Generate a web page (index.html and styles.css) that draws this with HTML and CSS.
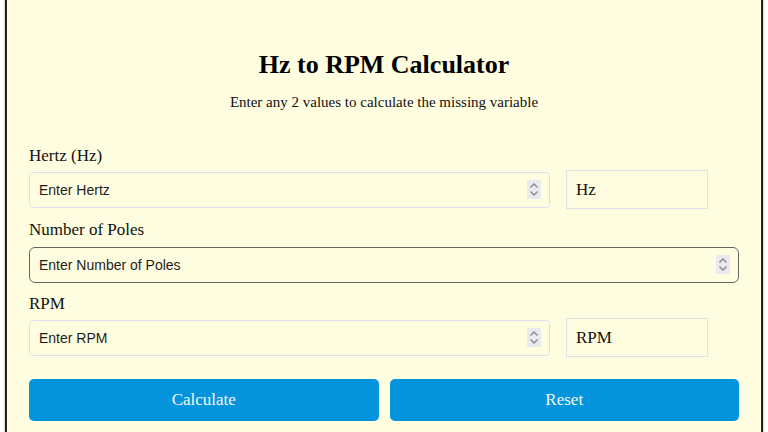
FILE: index.html
```html
<!DOCTYPE html>
<html lang="en">
<head>
    <meta charset="UTF-8">
    <meta name="viewport" content="width=device-width, initial-scale=1.0">
    <title>Hz to RPM Calculator</title>
    <link rel="stylesheet" href="styles.css">
</head>
<body>

    <div class="calculator">
        <h1>Hz to RPM Calculator</h1>
        <p class="subtitle">Enter any 2 values to calculate the missing variable</p>

        <div class="field">
            <label for="hertz">Hertz (Hz)</label>
            <div class="row">
                <div class="input-wrap">
                    <input type="number" id="hertz" placeholder="Enter Hertz">
                    <span class="spinner">
                        <svg viewBox="0 0 14 19" aria-hidden="true">
                            <path d="M3.5 7.5 7 4 10.5 7.5M3.5 11.5 7 15 10.5 11.5" fill="none" stroke="#85858c" stroke-width="1.3"/>
                        </svg>
                    </span>
                </div>
                <div class="unit">Hz</div>
            </div>
        </div>

        <div class="field">
            <label for="poles">Number of Poles</label>
            <div class="row single">
                <div class="input-wrap">
                    <input type="number" id="poles" class="active" placeholder="Enter Number of Poles">
                    <span class="spinner">
                        <svg viewBox="0 0 14 19" aria-hidden="true">
                            <path d="M3.5 7.5 7 4 10.5 7.5M3.5 11.5 7 15 10.5 11.5" fill="none" stroke="#85858c" stroke-width="1.3"/>
                        </svg>
                    </span>
                </div>
            </div>
        </div>

        <div class="field">
            <label for="rpm">RPM</label>
            <div class="row">
                <div class="input-wrap">
                    <input type="number" id="rpm" placeholder="Enter RPM">
                    <span class="spinner">
                        <svg viewBox="0 0 14 19" aria-hidden="true">
                            <path d="M3.5 7.5 7 4 10.5 7.5M3.5 11.5 7 15 10.5 11.5" fill="none" stroke="#85858c" stroke-width="1.3"/>
                        </svg>
                    </span>
                </div>
                <div class="unit">RPM</div>
            </div>
        </div>

        <div class="buttons">
            <button id="btnCalc">Calculate</button>
            <button id="btnReset">Reset</button>
        </div>
    </div>

</body>
</html>
```

FILE: styles.css
```css
body{
    margin: 0;
    background: #fff;
    font-family: "Liberation Serif", "Times New Roman", serif;
    color: #111;
}
.calculator{
    margin: 0 5px;
    min-height: 432px;
    box-sizing: border-box;
    background-color: #fffde0;
    border-left: 2px solid #222;
    border-right: 2px solid #222;
    box-shadow: 0 0 2px #888;
    padding: 50px 22px 0;
}
.calculator h1{
    margin: 0;
    font-size: 26px;
    line-height: 30px;
    text-align: center;
    color: #000;
}
.subtitle{
    margin: 12px 0 34px;
    font-size: 15px;
    line-height: 20px;
    text-align: center;
}
.field{
    margin-bottom: 11px;
}
.field label{
    display: block;
    font-size: 17px;
    line-height: 20px;
    margin-bottom: 4px;
}
.row{
    display: grid;
    grid-template-columns: 521px 142px;
    gap: 16px;
    align-items: center;
    min-height: 39px;
}
.row.single{
    grid-template-columns: 1fr;
    align-items: end;
}
.input-wrap{
    position: relative;
}
.input-wrap input{
    display: block;
    width: 100%;
    height: 36px;
    box-sizing: border-box;
    padding: 0 30px 0 9px;
    border: 1px solid #dde2e8;
    border-radius: 4px;
    background-color: transparent;
    font-family: "Liberation Sans", Arial, sans-serif;
    font-size: 14px;
    color: #222;
    outline: none;
    -moz-appearance: textfield;
}
.input-wrap input::placeholder{
    color: #1e1e1e;
}
.input-wrap input::-webkit-inner-spin-button,
.input-wrap input::-webkit-outer-spin-button{
    -webkit-appearance: none;
    margin: 0;
}
.input-wrap input.active{
    border-color: #666;
    border-radius: 6px;
}
.spinner{
    position: absolute;
    right: 9px;
    top: 8px;
    width: 14px;
    height: 19px;
    background-color: #e9e9ee;
}
.spinner svg{
    display: block;
    width: 14px;
    height: 19px;
}
.unit{
    height: 39px;
    box-sizing: border-box;
    border: 1px solid #dde2e8;
    padding: 0 9px;
    font-size: 17px;
    line-height: 37px;
    color: #111;
}
.buttons{
    display: flex;
    gap: 11px;
    margin-top: 22px;
}
.buttons button{
    flex: 1;
    height: 42px;
    border: none;
    border-radius: 5px;
    background-color: #0394db;
    color: #f4f8fc;
    font-family: "Liberation Serif", "Times New Roman", serif;
    font-size: 17px;
    cursor: pointer;
}
```
